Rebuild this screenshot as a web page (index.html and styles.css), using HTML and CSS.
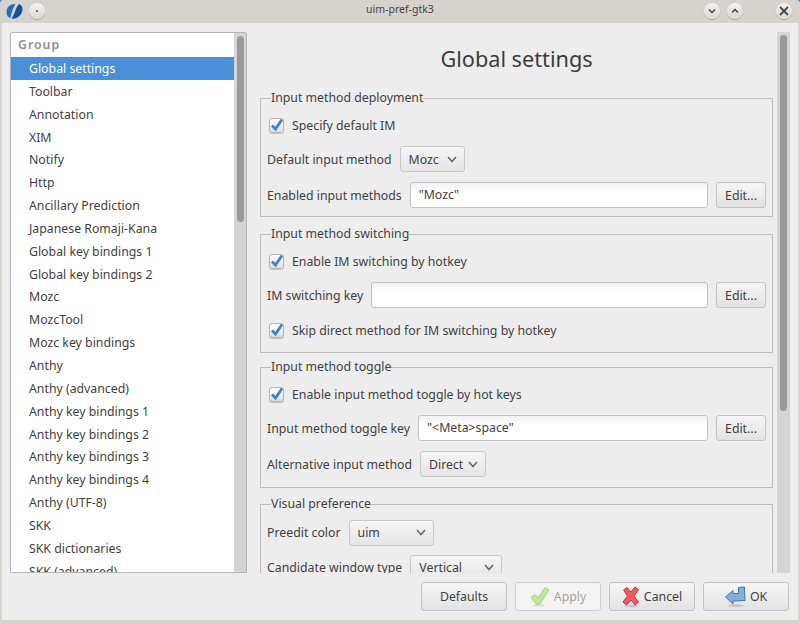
FILE: index.html
```html
<!DOCTYPE html>
<html lang="en">
<head>
<meta charset="utf-8">
<title>uim-pref-gtk3</title>
<link rel="stylesheet" href="styles.css">
</head>
<body>
<div class="window">
  <header class="titlebar">
    <div class="tb-left">
      <svg class="app-icon" width="17" height="16" viewBox="0 0 17 16"><path d="M9.500 1 C5 0.500 0.500 4 0.500 9 C0.500 12 2 14.500 4.500 15 C5 10.500 7 5 9.500 1Z" fill="#1f6fb8"/><path d="M13 1 C10 4 9.500 8 8 11 C7.300 12.500 6.500 14 5.500 15.500 C11 16.500 16.500 12 16.500 6 C16.500 3.500 15 1.500 13 1Z" fill="#12529a"/></svg>
      <span class="tb-btn"><svg width="16" height="16" viewBox="0 0 16 16"><circle cx="8" cy="8" r="1" fill="#555"/></svg></span>
    </div>
    <div class="tb-title">uim-pref-gtk3</div>
    <div class="tb-right">
      <span class="tb-btn"><svg width="16" height="16" viewBox="0 0 16 16"><path d="M5 6.500 L8 9.500 L11 6.500" fill="none" stroke="#444" stroke-width="1.500"/></svg></span>
      <span class="tb-btn"><svg width="16" height="16" viewBox="0 0 16 16"><path d="M5 9.500 L8 6.500 L11 9.500" fill="none" stroke="#444" stroke-width="1.500"/></svg></span>
      <span class="tb-btn tb-close"><svg width="16" height="16" viewBox="0 0 16 16"><path d="M4 4 L12 12 M12 4 L4 12" fill="none" stroke="#444" stroke-width="1.800"/></svg></span>
    </div>
  </header>

  <main class="content">
    <section class="list-box">
      <div class="list-scroll">
        <div class="list-head">Group</div>
        <ul class="list">
          <li class="selected">Global settings</li>
          <li>Toolbar</li>
          <li>Annotation</li>
          <li>XIM</li>
          <li>Notify</li>
          <li>Http</li>
          <li>Ancillary Prediction</li>
          <li>Japanese Romaji-Kana</li>
          <li>Global key bindings 1</li>
          <li>Global key bindings 2</li>
          <li>Mozc</li>
          <li>MozcTool</li>
          <li>Mozc key bindings</li>
          <li>Anthy</li>
          <li>Anthy (advanced)</li>
          <li>Anthy key bindings 1</li>
          <li>Anthy key bindings 2</li>
          <li>Anthy key bindings 3</li>
          <li>Anthy key bindings 4</li>
          <li>Anthy (UTF-8)</li>
          <li>SKK</li>
          <li>SKK dictionaries</li>
          <li>SKK (advanced)</li>
        </ul>
      </div>
      <div class="track list-track"><div class="thumb list-thumb"></div></div>
    </section>

    <section class="pane">
      <div class="pane-scroll">
        <h1 class="pane-title">Global settings</h1>

        <fieldset class="frame frame-a">
          <legend>Input method deployment</legend>
          <label class="row check-row"><span class="check"><svg width="15" height="15" viewBox="0 0 15 15"><path d="M3 7.500 L6.500 11 L13 1.500" fill="none" stroke="#3f83cf" stroke-width="2.800"/></svg></span>Specify default IM</label>
          <div class="row"><span>Default input method</span><span class="combo combo-mozc">Mozc<svg class="chev" width="10" height="7" viewBox="0 0 10 7"><path d="M1 1 L5 5.500 L9 1" fill="none" stroke="#666" stroke-width="1.500"/></svg></span></div>
          <div class="row"><span>Enabled input methods</span><span class="entry">"Mozc"</span><span class="btn edit">Edit...</span></div>
        </fieldset>

        <fieldset class="frame frame-b">
          <legend>Input method switching</legend>
          <label class="row check-row"><span class="check"><svg width="15" height="15" viewBox="0 0 15 15"><path d="M3 7.500 L6.500 11 L13 1.500" fill="none" stroke="#3f83cf" stroke-width="2.800"/></svg></span>Enable IM switching by hotkey</label>
          <div class="row"><span>IM switching key</span><span class="entry"></span><span class="btn edit">Edit...</span></div>
          <label class="row check-row check-last"><span class="check"><svg width="15" height="15" viewBox="0 0 15 15"><path d="M3 7.500 L6.500 11 L13 1.500" fill="none" stroke="#3f83cf" stroke-width="2.800"/></svg></span>Skip direct method for IM switching by hotkey</label>
        </fieldset>

        <fieldset class="frame frame-c">
          <legend>Input method toggle</legend>
          <label class="row check-row"><span class="check"><svg width="15" height="15" viewBox="0 0 15 15"><path d="M3 7.500 L6.500 11 L13 1.500" fill="none" stroke="#3f83cf" stroke-width="2.800"/></svg></span>Enable input method toggle by hot keys</label>
          <div class="row"><span>Input method toggle key</span><span class="entry">"&lt;Meta&gt;space"</span><span class="btn edit">Edit...</span></div>
          <div class="row"><span>Alternative input method</span><span class="combo combo-direct">Direct<svg class="chev" width="10" height="7" viewBox="0 0 10 7"><path d="M1 1 L5 5.500 L9 1" fill="none" stroke="#666" stroke-width="1.500"/></svg></span></div>
        </fieldset>

        <fieldset class="frame frame-d">
          <legend>Visual preference</legend>
          <div class="row"><span>Preedit color</span><span class="combo combo-uim">uim<svg class="chev" width="10" height="7" viewBox="0 0 10 7"><path d="M1 1 L5 5.500 L9 1" fill="none" stroke="#666" stroke-width="1.500"/></svg></span></div>
          <div class="row"><span>Candidate window type</span><span class="combo combo-vert">Vertical<svg class="chev" width="10" height="7" viewBox="0 0 10 7"><path d="M1 1 L5 5.500 L9 1" fill="none" stroke="#666" stroke-width="1.500"/></svg></span></div>
        </fieldset>
      </div>
      <div class="track pane-track"><div class="thumb pane-thumb"></div></div>
    </section>
  </main>

  <footer class="actions">
    <span class="btn action">Defaults</span>
    <span class="btn action disabled"><svg width="20" height="22" viewBox="0 0 20 22"><ellipse cx="9" cy="19.500" rx="6" ry="1.500" fill="#dcdcdc"/><path d="M1 11 L5 8.500 L8 12 L15 1.500 L19 4 L9.500 18.500 L6.500 18.500 Z" fill="#bde89b" stroke="#a3d488" stroke-width="1"/></svg>Apply</span>
    <span class="btn action"><svg width="18" height="22" viewBox="0 0 18 22"><ellipse cx="9" cy="20" rx="7" ry="1.500" fill="#c6c6c6"/><path d="M1.500 4 L5 1.500 L9 6 L13 1 L16.500 3.500 L12 10 L16.500 16 L13 19 L9 14 L4.500 19 L1 16 L5.500 10 Z" fill="#ee5a60" stroke="#c2343b" stroke-width="1"/></svg>Cancel</span>
    <span class="btn action"><svg width="21" height="22" viewBox="0 0 21 22"><ellipse cx="11" cy="19.500" rx="8" ry="1.500" fill="#c6c6c6"/><path d="M0.500 11 L8 4.500 L8 7.500 L13.500 7.500 L13.500 1.500 L19.500 1 L20 14.500 L8 15 L8 18 Z" fill="#86aedb" stroke="#3f75b5" stroke-width="1"/></svg>OK</span>
  </footer>
</div>
</body>
</html>
```
FILE: styles.css
```css
* { box-sizing: border-box; }
html, body { margin: 0; padding: 0; }
body {
  width: 800px;
  height: 624px;
  overflow: hidden;
  background: #4a90d9;
  font-family: "Noto Sans", "Open Sans", sans-serif;
  font-size: 12.300px;
  color: #3f3f3f;
}
.window {
  width: 800px;
  height: 624px;
  display: flex;
  flex-direction: column;
  background: #ededed;
  border: solid #d6d2ce;
  border-width: 0 2px 4px 2px;
  border-radius: 4px 4px 0 0;
  overflow: hidden;
}
.titlebar {
  height: 23px;
  flex: none;
  display: flex;
  align-items: center;
  justify-content: space-between;
  position: relative;
  background: #d6d2ce;
  padding: 0 6px 2px 4px;
}
.tb-left { display: flex; align-items: center; gap: 6px; }
.tb-right { display: flex; align-items: center; gap: 7px; }
.tb-close { margin-left: 26px; }
.tb-title {
  position: absolute;
  left: 0;
  right: 0;
  top: 1px;
  text-align: center;
  font-size: 10.500px;
  line-height: 16px;
  color: #444;
}
.tb-btn {
  width: 16px;
  height: 16px;
  border-radius: 50%;
  background: linear-gradient(#f4f3f2, #d9d6d3);
  box-shadow: 0 1px 1px #a8a5a2;
  display: block;
}
.tb-btn svg { display: block; }
.app-icon { display: block; }
.content {
  flex: 1;
  min-height: 0;
  display: flex;
  padding: 9px 8px 0 8px;
  gap: 13px;
}
.list-box {
  width: 237px;
  height: 541px;
  flex: none;
  display: flex;
  background: #fff;
  border: 1px solid #b5b5b5;
  border-radius: 2px 2px 0 0;
  overflow: hidden;
}
.list-scroll { flex: 1; min-width: 0; overflow: hidden; }
.list-head {
  height: 24px;
  line-height: 24px;
  padding-left: 7px;
  font-weight: 600;
  letter-spacing: 1px;
  color: #8f8f8f;
}
.list { list-style: none; margin: 0; padding: 0; }
.list li {
  height: 22.850px;
  line-height: 23px;
  padding-left: 18px;
  white-space: nowrap;
}
.list li.selected { background: #4a90d9; color: #fff; }
.track { flex: none; background: #d4d4d4; }
.list-track { width: 12px; padding: 3px 2px; }
.thumb { background: #9a9a9a; border-radius: 4px; }
.list-thumb { width: 7px; height: 186px; margin-left: 1px; }
.pane {
  flex: 1;
  min-width: 0;
  height: 541px;
  display: flex;
  overflow: hidden;
}
.pane-scroll { width: 518px; flex: none; overflow: hidden; }
.pane-title {
  margin: 0;
  width: 513px;
  height: 58px;
  padding-top: 11px;
  text-align: center;
  font-size: 21.700px;
  line-height: 32px;
  font-weight: 400;
  color: #3c3c3c;
}
.pane-track { width: 13px; margin-left: -1px; padding: 3px 3px; }
.pane-thumb { width: 7px; height: 376px; }
.frame {
  margin: 0 5px 0 0;
  width: 513px;
  padding: 3px 6px 0 6px;
  border: 1px solid #bdbdbd;
  min-width: 0;
}
.frame legend {
  padding: 0;
  margin-left: 4px;
  line-height: 16px;
  height: 16px;
}
.frame-a { height: 127px; }
.frame-b { height: 127px; margin-top: 9px; }
.frame-c { height: 129px; margin-top: 6px; }
.frame-d { height: 100px; margin-top: 8px; }
.frame-d .row { height: 35px; }
.row {
  display: flex;
  align-items: center;
  height: 36px;
  gap: 8px;
  white-space: nowrap;
}
.check-row { height: 32px; gap: 8px; margin-left: 2px; }
.check-last { height: 34px; }
.check {
  width: 15px;
  height: 15px;
  flex: none;
  border: 1px solid #b5b5b5;
  border-radius: 3px;
  background: linear-gradient(#fff, #dedede);
  box-shadow: 0 1px 1px #c4c4c4;
}
.check svg { display: block; margin: -1px; }
.combo {
  height: 26px;
  border: 1px solid #c8c8c8;
  border-radius: 3px;
  background: linear-gradient(#f6f6f6, #e4e4e4);
  display: flex;
  align-items: center;
  justify-content: space-between;
  padding: 0 7px 0 8px;
  flex: none;
}
.combo-mozc { width: 65px; }
.combo-direct { width: 66px; }
.combo-uim { width: 85px; }
.combo-vert { width: 92px; }
.chev { flex: none; }
.entry {
  flex: 1;
  min-width: 0;
  height: 26px;
  line-height: 24px;
  border: 1px solid #c2c2c2;
  border-radius: 3px;
  background: linear-gradient(#f2f2f2, #fff 40%);
  padding: 0 8px;
}
.btn {
  border: 1px solid #c2c2c2;
  border-radius: 3px;
  background: linear-gradient(#f6f6f6, #e2e2e2);
  display: flex;
  align-items: center;
  justify-content: center;
  flex: none;
}
.edit { width: 50px; height: 26px; }
.actions {
  flex: none;
  height: 47px;
  display: flex;
  justify-content: flex-end;
  gap: 8px;
  padding: 9px 9px 0 0;
}
.action { width: 86px; height: 29px; gap: 4px; }
.action.disabled {
  background: #f3f3f3;
  border-color: #cfcfcf;
  color: #a5a5a5;
}
```
